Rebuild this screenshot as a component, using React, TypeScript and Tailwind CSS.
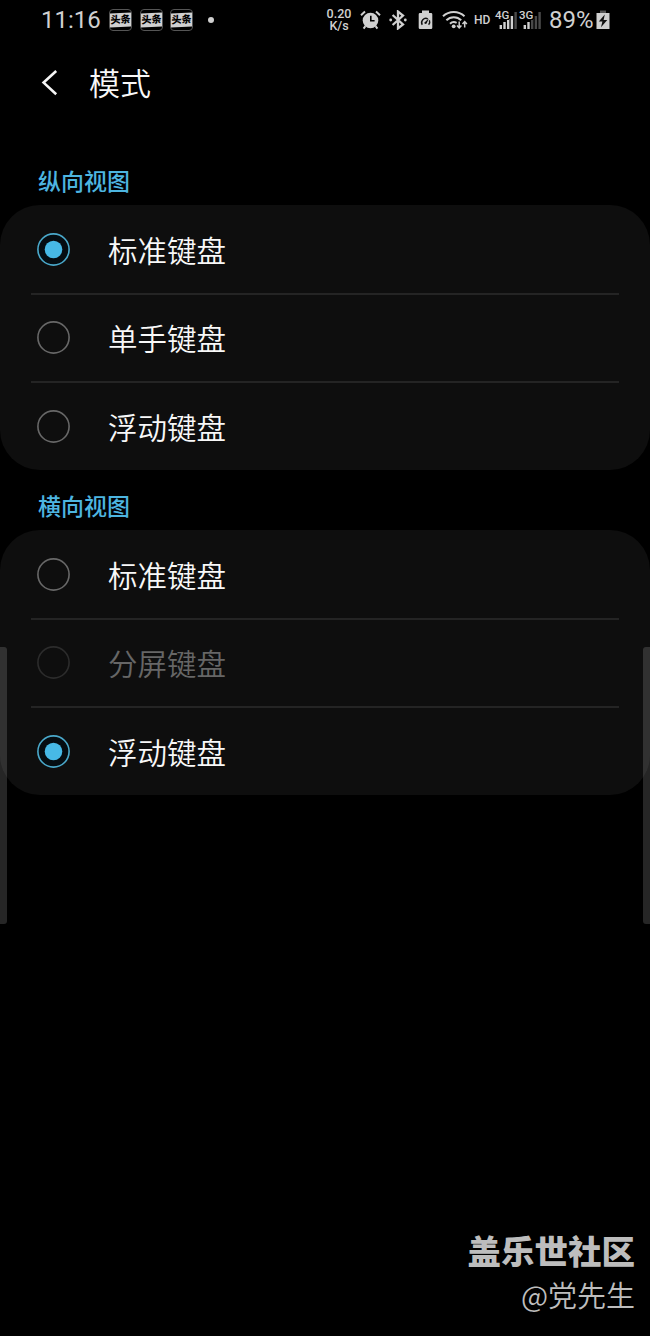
import React, { useState } from 'react';
import clsx from 'clsx';

interface Option {
  id: string;
  label: string;
  disabled?: boolean;
}

const portraitOptions: Option[] = [
  { id: 'standard', label: '标准键盘' },
  { id: 'one-handed', label: '单手键盘' },
  { id: 'floating', label: '浮动键盘' },
];

const landscapeOptions: Option[] = [
  { id: 'standard', label: '标准键盘' },
  { id: 'split', label: '分屏键盘', disabled: true },
  { id: 'floating', label: '浮动键盘' },
];

function NewsIcon() {
  return (
    <div className="flex h-[22px] w-[23px] items-center rounded-[4px] border border-[#555]">
      <div className="flex h-[14px] w-full -skew-y-3 items-center justify-center bg-[#d0d0d0] text-[10px] leading-none font-black whitespace-nowrap text-black">
        头条
      </div>
    </div>
  );
}

function AlarmIcon() {
  return (
    <svg className="ml-[8px] h-[20px] w-[21px]" viewBox="0 0 21 20" fill="none">
      <circle cx="10.5" cy="10.5" r="7.8" fill="#d0d0d0" />
      <path d="M1 5.2 5 1.6M20 5.2 16 1.6M5.4 16.2 3.6 18.6M15.6 16.2 17.4 18.6" stroke="#d0d0d0" strokeWidth="2" />
      <path d="M10.8 5.8V10.8H14.6" stroke="#000" strokeWidth="1.6" />
    </svg>
  );
}

function BluetoothIcon() {
  return (
    <svg className="ml-[8px] h-[20px] w-[18px]" viewBox="0 0 18 20" fill="none">
      <path d="M3.6 5 14 14.4 9 18.4V1.6L14 5.6 3.6 15" stroke="#d0d0d0" strokeWidth="2.3" />
      <circle cx="1.7" cy="10" r="1.4" fill="#d0d0d0" />
      <circle cx="16.3" cy="10" r="1.4" fill="#d0d0d0" />
    </svg>
  );
}

function PowerIcon() {
  return (
    <svg className="ml-[11px] h-[20px] w-[15px]" viewBox="0 0 15 20" fill="none">
      <path d="M4 .5h7V3h2a1.3 1.3 0 0 1 1.3 1.3v13.4a1.3 1.3 0 0 1-1.3 1.3H2a1.3 1.3 0 0 1-1.3-1.3V4.3A1.3 1.3 0 0 1 2 3h2z" fill="#d0d0d0" />
      <path d="M4.2 14.8a4.3 4.3 0 0 1 5.6-6M11.4 10.3a4.3 4.3 0 0 1-.8 4.5" stroke="#111" strokeWidth="1.4" />
      <path d="M6.2 12.8 10.8 8.4 8.6 13.6a1.5 1.5 0 0 1-2.4-.8z" fill="#111" />
    </svg>
  );
}

function WifiIcon() {
  return (
    <svg className="ml-[9px] h-[20px] w-[26px]" viewBox="0 0 26 20" fill="none" stroke="#d0d0d0">
      <path d="M1 6.3a15.5 15.5 0 0 1 21.5 0M4.4 10.2a10.5 10.5 0 0 1 14.8 0M8 13.8a5.8 5.8 0 0 1 6.6-1" strokeWidth="2" />
      <circle cx="11.7" cy="16.3" r="1.9" fill="#d0d0d0" stroke="none" />
      <path d="M17.2 11.5V17.5M15 15.4 17.2 17.8 19.4 15.4M22.7 17.5V12M20.5 14 22.7 11.6 24.9 14" strokeWidth="1.5" />
    </svg>
  );
}

function Signal({ name, level }: { name: string; level: number }) {
  const heights = [4, 7, 10, 13, 17];
  return (
    <div className="relative h-[20px] w-[22px]">
      <svg className="h-[20px] w-[22px]" viewBox="0 0 22 20">
        {heights.map((h, i) => (
          <rect key={i} x={4.6 + i * 3.7} y={19 - h} width="2.4" height={h} fill={i < level ? '#d0d0d0' : '#4a4a4a'} />
        ))}
      </svg>
      <span className="absolute top-0 left-0 bg-black text-[11.5px] leading-[10px] font-medium">{name}</span>
    </div>
  );
}

function ChargeIcon() {
  return (
    <svg className="ml-[4px] h-[20px] w-[14px]" viewBox="0 0 14 20">
      <path d="M4 .5h6v3H4z" fill="#555" />
      <path d="M.5 3h13v16H.5z" fill="#d0d0d0" />
      <path d="M8.8 4.6 2.8 11.6H6.4L5 17.3 11.3 10H7.6z" fill="#111" />
    </svg>
  );
}

function StatusBar() {
  return (
    <div className="flex h-[39px] items-center pl-[41px] font-['Roboto','Noto_Sans_CJK_SC',sans-serif] text-[#d0d0d0]">
      <span className="w-[68px] text-[24px] leading-none">11:16</span>
      <div className="flex gap-[7.5px]">
        <NewsIcon />
        <NewsIcon />
        <NewsIcon />
      </div>
      <div className="ml-[15px] h-[6px] w-[6px] rounded-full bg-[#d0d0d0]" />
      <div className="ml-[112px] w-[26px] text-center text-[12.5px] leading-[12px] font-medium">
        <div>0.20</div>
        <div>K/s</div>
      </div>
      <AlarmIcon />
      <BluetoothIcon />
      <PowerIcon />
      <WifiIcon />
      <span className="ml-[6px] w-[21px] text-[12px] font-medium">HD</span>
      <Signal name="4G" level={4} />
      <div className="ml-[2px]">
        <Signal name="3G" level={2} />
      </div>
      <span className="ml-[8px] w-[43px] text-[24px] leading-none">89%</span>
      <ChargeIcon />
    </div>
  );
}

function Radio({ checked, disabled }: { checked: boolean; disabled?: boolean }) {
  const ring = checked ? '#4aa9cb' : disabled ? '#2c2c2c' : '#686868';
  return (
    <svg className="h-[33px] w-[33px]" viewBox="0 0 33 33">
      <circle cx="16.5" cy="16.5" r="15.6" fill={checked ? '#050d12' : 'none'} stroke={ring} strokeWidth="1.6" />
      {checked && <circle cx="16.5" cy="16.5" r="8.8" fill="#47b9e6" />}
    </svg>
  );
}

interface ModeGroupProps {
  title: string;
  options: Option[];
  value: string;
  onChange: (id: string) => void;
}

function ModeGroup({ title, options, value, onChange }: ModeGroupProps) {
  return (
    <section>
      <h2 className="flex h-[60px] items-center pl-[38px] pt-[10px] text-[23px] leading-none font-medium text-[#4db5e0]">
        {title}
      </h2>
      <div className="h-[265px] rounded-[40px] bg-[#0e0e0e] px-[31px]">
        {options.map((option, index) => (
          <button
            key={option.id}
            disabled={option.disabled}
            onClick={() => onChange(option.id)}
            className={clsx(
              'flex w-full items-center pl-[6px] text-left text-[29.5px] leading-none font-[350]',
              index === 0 && 'h-[90px] border-b-2 border-[#242424] pt-[1px]',
              index === 1 && 'h-[88px] border-b-2 border-[#242424] pb-[1px]',
              index === 2 && 'h-[87px]',
              option.disabled ? 'text-[#666]' : 'text-[#f8f8f8]'
            )}
          >
            <Radio checked={value === option.id} disabled={option.disabled} />
            <span className="ml-[38px]">{option.label}</span>
          </button>
        ))}
      </div>
    </section>
  );
}

export default function App() {
  const [portrait, setPortrait] = useState('standard');
  const [landscape, setLandscape] = useState('floating');

  return (
    <div className="relative flex h-[1336px] w-[650px] flex-col overflow-hidden bg-black font-['Noto_Sans_CJK_SC',sans-serif]">
      <StatusBar />
      <header className="flex h-[88px] items-center pl-[41px]">
        <svg className="h-[28px] w-[18px]" viewBox="0 0 18 28" fill="none">
          <path d="M15.2 2 2.6 13.6 15.2 25.2" stroke="#f5f5f5" strokeWidth="2.6" />
        </svg>
        <h1 className="ml-[30px] pb-[3px] text-[31px] leading-none font-[350] text-[#f8f8f8]">模式</h1>
      </header>

      <main className="mt-[18px]">
        <ModeGroup title="纵向视图" options={portraitOptions} value={portrait} onChange={setPortrait} />
        <ModeGroup title="横向视图" options={landscapeOptions} value={landscape} onChange={setLandscape} />
      </main>

      <footer className="mt-auto flex flex-col items-end pr-[15px] pb-[20px] text-[#bdbdbd]">
        <div className="text-[33.5px] leading-[44px] font-black">盖乐世社区</div>
        <div className="text-[29px] leading-[44px] font-[350]">@党先生</div>
      </footer>

      {/* edge panel handles */}
      <div className="absolute top-[647px] left-0 h-[277px] w-[7px] rounded-r-[3px] bg-white/15" />
      <div className="absolute top-[647px] right-0 h-[277px] w-[7px] rounded-l-[3px] bg-white/15" />
    </div>
  );
}
